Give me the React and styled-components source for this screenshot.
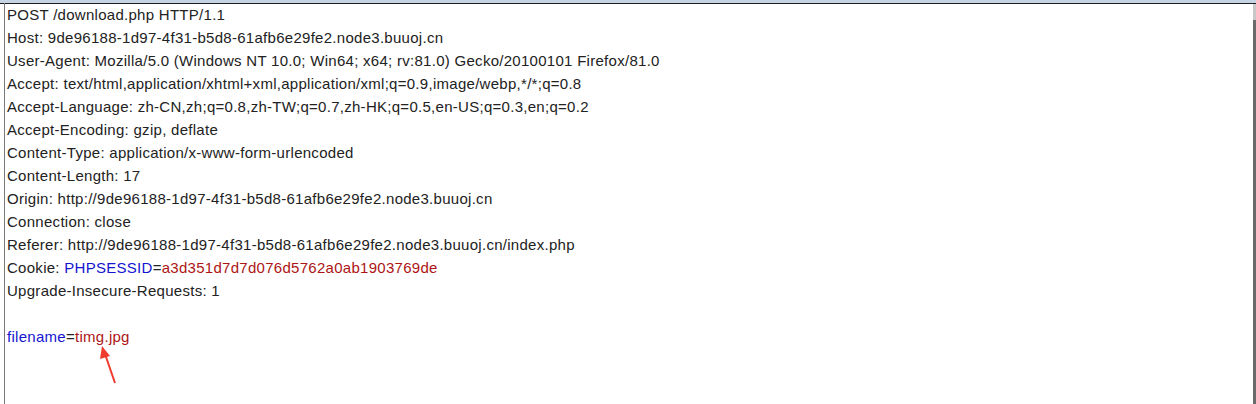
import React from "react";
import styled, { createGlobalStyle } from "styled-components";

const GlobalStyle = createGlobalStyle`
    html, body {
        margin: 0;
        padding: 0;
        background: #ffffff;
    }
`;

const lines = [
    "POST /download.php HTTP/1.1",
    "Host: 9de96188-1d97-4f31-b5d8-61afb6e29fe2.node3.buuoj.cn",
    "User-Agent: Mozilla/5.0 (Windows NT 10.0; Win64; x64; rv:81.0) Gecko/20100101 Firefox/81.0",
    "Accept: text/html,application/xhtml+xml,application/xml;q=0.9,image/webp,*/*;q=0.8",
    "Accept-Language: zh-CN,zh;q=0.8,zh-TW;q=0.7,zh-HK;q=0.5,en-US;q=0.3,en;q=0.2",
    "Accept-Encoding: gzip, deflate",
    "Content-Type: application/x-www-form-urlencoded",
    "Content-Length: 17",
    "Origin: http://9de96188-1d97-4f31-b5d8-61afb6e29fe2.node3.buuoj.cn",
    "Connection: close",
    "Referer: http://9de96188-1d97-4f31-b5d8-61afb6e29fe2.node3.buuoj.cn/index.php",
];

const App = () => {
    return (
        <>
            <GlobalStyle />
            <Window>
                <TopBar />
                <Body>
                    <Editor>
                        {lines.map((line, i) => (
                            <Line key={i}>{line}</Line>
                        ))}
                        <Line>
                            Cookie: <Key>PHPSESSID</Key>=
                            <Value>a3d351d7d7d076d5762a0ab1903769de</Value>
                        </Line>
                        <Line>Upgrade-Insecure-Requests: 1</Line>
                        <Line>&nbsp;</Line>
                        <Line>
                            <Key>filename</Key>=<Value>timg.jpg</Value>
                        </Line>
                        <Arrow width="20" height="40" viewBox="0 0 20 40">
                            <line
                                x1="16"
                                y1="37"
                                x2="6"
                                y2="8"
                                stroke="#f03c2e"
                                strokeWidth="2"
                            />
                            <polygon points="3,0 1,13 11,10" fill="#f03c2e" />
                        </Arrow>
                    </Editor>
                    <Scrollbar>
                        <Thumb />
                    </Scrollbar>
                </Body>
            </Window>
        </>
    );
};

const Window = styled.div`
    width: 1256px;
    height: 404px;
    display: flex;
    flex-direction: column;
    overflow: hidden;
    background: #ffffff;
`;

const TopBar = styled.div`
    height: 3px;
    background: #c5d5e6;
    border-bottom: 1px solid #1e1e1e;
    flex-shrink: 0;
`;

const Body = styled.div`
    flex: 1;
    display: flex;
    padding-left: 4px;
`;

const Editor = styled.div`
    position: relative;
    flex: 1;
    border-left: 1px solid #7a7a7a;
    padding: 0 0 0 2px;
    margin-top: -1px;
    font-family: "Liberation Sans", Arial, sans-serif;
    font-size: 15px;
    letter-spacing: 0.28px;
    color: #222222;
`;

const Line = styled.div`
    height: 23px;
    line-height: 23px;
    white-space: pre;
`;

const Key = styled.span`
    color: #1414d0;
`;

const Value = styled.span`
    color: #ad1515;
`;

const Arrow = styled.svg`
    position: absolute;
    left: 94px;
    top: 343px;
`;

const Scrollbar = styled.div`
    width: 3px;
    background: #6b6b6b;
    display: flex;
    flex-direction: column;
`;

const Thumb = styled.div`
    height: 16px;
    background: #c8c8c8;
`;

export default App;
